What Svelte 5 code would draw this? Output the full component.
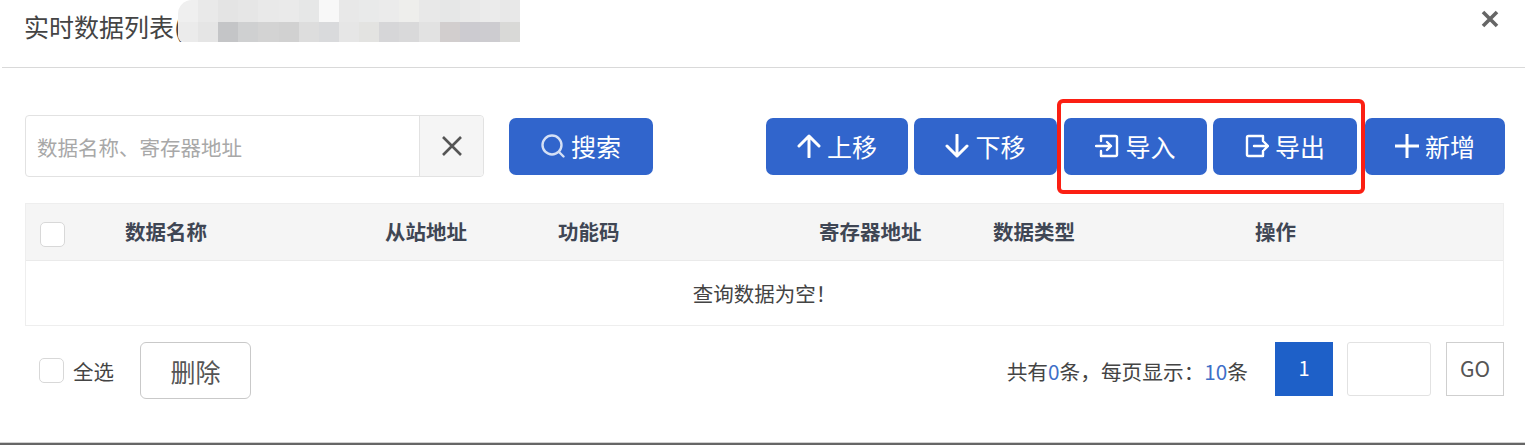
<script>
  const topRow = ['#efefef','#e9e9e9','#e4e4e4','#e6e6e6','#e9e9e9','#eaeaea','#e6e7e7','#f8f8f8','#e8e8e8','#e9eaea','#ebebeb','#eeeeec','#e8e8e8','#e6e7e7','#e9e9e9','#ebebeb','#e8e8e8'];
  const lowRow = ['#ebebeb','#e5e5e5','#c4c5c7','#cfd0d1','#d3d3d3','#d1d1d1','#dddddd','#d9dadc','#e6e6e6','#e3e3e1','#d6d6d8','#d9d9da','#e2e2e2','#d2cece','#cccbd0','#cdccd0','#d9d9d7'];
  const columns = ['数据名称', '从站地址', '功能码', '寄存器地址', '数据类型', '操作'];
</script>

<div class="page">
  <header class="head">
    <h1>实时数据列表(</h1>
    <div class="mosaic" aria-hidden="true">
      {#each topRow as c}<span style="background:{c}"></span>{/each}
      {#each lowRow as c}<span style="background:{c}"></span>{/each}
    </div>
    <svg class="close" viewBox="0 0 20 20" aria-hidden="true"><path d="M3 3 17 17M17 3 3 17" /></svg>
  </header>

  <section class="toolbar">
    <div class="search">
      <span class="placeholder">数据名称、寄存器地址</span>
      <span class="clear">
        <svg viewBox="0 0 20 20" aria-hidden="true"><path d="M1 1 19 19M19 1 1 19" /></svg>
      </span>
    </div>
    <button class="btn b-search">
      <svg viewBox="0 0 24 24" aria-hidden="true"><circle cx="11" cy="11" r="9.5" /><path d="M18 18 22.5 22.5" /></svg>
      搜索
    </button>
    <div class="actions">
      <button class="btn b-up">
        <svg class="bold" viewBox="0 0 24 24" aria-hidden="true"><path d="M12 23V2M2 12 12 2l10 10" /></svg>
        上移
      </button>
      <button class="btn b-down">
        <svg class="bold" viewBox="0 0 24 24" aria-hidden="true"><path d="M12 1v21M2 12l10 10 10-10" /></svg>
        下移
      </button>
      <div class="marked">
        <button class="btn b-in">
          <svg viewBox="0 0 24 24" aria-hidden="true"><path d="M6 7V2h14.5A1.5 1.5 0 0 1 22 3.500v17a1.500 1.500 0 0 1-1.500 1.500H6v-5M1 12h15M12 8l4 4-4 4" /></svg>
          导入
        </button>
        <button class="btn b-out">
          <svg viewBox="0 0 24 24" aria-hidden="true"><path d="M18 7V2H3.500A1.500 1.500 0 0 0 2 3.500v17A1.500 1.500 0 0 0 3.500 22H18v-5M9 12h14M19 8l4 4-4 4" /></svg>
          导出
        </button>
      </div>
      <button class="btn b-add">
        <svg class="bold" viewBox="0 0 24 24" aria-hidden="true"><path d="M12 0v24M0 12h24" /></svg>
        新增
      </button>
    </div>
  </section>

  <section class="table">
    <div class="thead">
      <span class="check"></span>
      {#each columns as col}<span class="th">{col}</span>{/each}
    </div>
    <div class="empty">查询数据为空！</div>
  </section>

  <footer class="foot">
    <span class="check all"></span>
    <span class="all-label">全选</span>
    <button class="del">删除</button>
    <div class="pager">
      <span class="info">共有<em>0</em>条，每页显示：<em>10</em>条</span>
      <span class="current">1</span>
      <span class="jump"></span>
      <span class="go">GO</span>
    </div>
  </footer>
</div>

<style>
  :global(body) {
    margin: 0;
    background: #fff;
  }
  .page {
    width: 1525px;
    height: 445px;
    box-sizing: border-box;
    overflow: hidden;
    border-bottom: 2px solid #666;
    box-shadow: inset 0 -1px 0 #d0d0d0;
    font-family: "Noto Sans CJK SC", "Noto Sans", sans-serif;
    color: #444;
  }
  .head {
    display: flex;
    align-items: flex-start;
    height: 68px;
    box-sizing: border-box;
    margin-left: 2px;
    padding-left: 22px;
    border-bottom: 1px solid #d9d9d9;
  }
  h1 {
    flex: none;
    margin: 10px 0 0;
    width: 154px;
    font-size: 25px;
    line-height: 32px;
    font-weight: 400;
    color: #444;
    white-space: nowrap;
  }
  .mosaic {
    position: relative;
    z-index: 1;
    display: grid;
    grid-template-columns: repeat(17, 1fr);
    grid-template-rows: 22px 20px;
    width: 342px;
    height: 42px;
    border-top-left-radius: 14px;
    border-bottom-left-radius: 6px;
    overflow: hidden;
  }
  .close {
    width: 20px;
    height: 20px;
    margin: 9px 25px 0 auto;
    fill: none;
    stroke: #666;
    stroke-width: 3.6;
  }
  .toolbar {
    display: flex;
    align-items: center;
    height: 62px;
    margin-top: 47px;
    padding: 0 20px 0 25px;
  }
  .search {
    display: flex;
    width: 459px;
    height: 62px;
    box-sizing: border-box;
    border: 1px solid #e2e2e2;
    border-radius: 4px;
  }
  .placeholder {
    flex: 1;
    padding-left: 11px;
    font-size: 20.5px;
    line-height: 63px;
    color: #a8a8a8;
    white-space: nowrap;
  }
  .clear {
    display: flex;
    align-items: center;
    justify-content: center;
    width: 63px;
    background: #f5f5f5;
    border-left: 1px solid #e2e2e2;
    border-radius: 0 4px 4px 0;
  }
  .clear svg {
    width: 20px;
    height: 20px;
    fill: none;
    stroke: #555;
    stroke-width: 2.6;
  }
  .btn {
    display: flex;
    align-items: center;
    justify-content: center;
    gap: 6px;
    height: 57px;
    padding: 0;
    border: 0;
    border-radius: 7px;
    background: #3165cc;
    color: #fff;
    font-family: inherit;
    font-size: 25px;
    white-space: nowrap;
  }
  .btn svg {
    width: 24px;
    height: 24px;
    flex: none;
    fill: none;
    stroke: #fff;
    stroke-width: 2.4;
    stroke-linecap: round;
    stroke-linejoin: round;
  }
  .btn svg.bold {
    stroke-width: 3;
  }
  .b-search {
    width: 144px;
    margin-left: 25px;
  }
  .b-search svg {
    stroke: #d5e0f5;
  }
  .actions {
    display: flex;
    align-items: center;
    margin-left: auto;
  }
  .b-up { width: 142px; }
  .b-down { width: 143px; margin-left: 6px; }
  .marked {
    position: relative;
    display: flex;
    gap: 6px;
    margin-left: 7px;
  }
  .marked::after {
    content: "";
    position: absolute;
    inset: -19px -8px -19px -7px;
    border: 4px solid #fb1f13;
    border-radius: 6px;
    pointer-events: none;
  }
  .b-in { width: 143px; }
  .b-out { width: 144px; }
  .b-add { width: 140px; margin-left: 8px; }
  .table {
    width: 1479px;
    height: 123px;
    box-sizing: border-box;
    margin: 26px 0 0 25px;
    border: 1px solid #eeeeee;
  }
  .thead {
    display: grid;
    grid-template-columns: 99px 260px 173px 261px 174px 262px 1fr;
    align-items: center;
    height: 57px;
    box-sizing: border-box;
    padding-bottom: 2px;
    background: #f5f5f5;
    border-bottom: 1px solid #eaeaea;
    font-size: 20.5px;
    font-weight: 700;
    color: #3f4654;
    white-space: nowrap;
  }
  .thead .check {
    margin-left: 14px;
    margin-top: 6px;
  }
  .check {
    display: block;
    width: 25px;
    height: 25px;
    box-sizing: border-box;
    background: #fff;
    border: 1px solid #d8d8d8;
    border-radius: 5px;
  }
  .empty {
    height: 63px;
    font-size: 20.5px;
    line-height: 64px;
    text-align: center;
    color: #444;
  }
  .foot {
    display: flex;
    align-items: flex-start;
    margin-top: 16px;
    padding: 0 21px 0 39px;
  }
  .check.all {
    margin-top: 16px;
  }
  .all-label {
    margin-left: 9px;
    font-size: 20.5px;
    line-height: 58px;
  }
  .del {
    width: 111px;
    height: 57px;
    margin-left: 26px;
    padding: 0;
    background: #fff;
    border: 1px solid #c9c9c9;
    border-radius: 6px;
    font-family: inherit;
    font-size: 25px;
    color: #555;
  }
  .pager {
    display: flex;
    align-items: flex-start;
    margin-left: auto;
  }
  .info {
    font-size: 20.7px;
    line-height: 58px;
    color: #444;
    white-space: nowrap;
  }
  .info em {
    font-style: normal;
    color: #3f6fc8;
  }
  .current {
    width: 58px;
    height: 54px;
    margin-left: 27px;
    background: #1e60c8;
    color: #fff;
    font-size: 20px;
    line-height: 52px;
    text-align: center;
  }
  .jump {
    width: 84px;
    height: 54px;
    box-sizing: border-box;
    margin-left: 14px;
    border: 1px solid #e2e2e2;
    border-radius: 3px;
  }
  .go {
    width: 58px;
    height: 54px;
    box-sizing: border-box;
    margin-left: 15px;
    border: 1px solid #cfcfcf;
    font-size: 21px;
    line-height: 50px;
    text-align: center;
    color: #555;
  }
</style>
